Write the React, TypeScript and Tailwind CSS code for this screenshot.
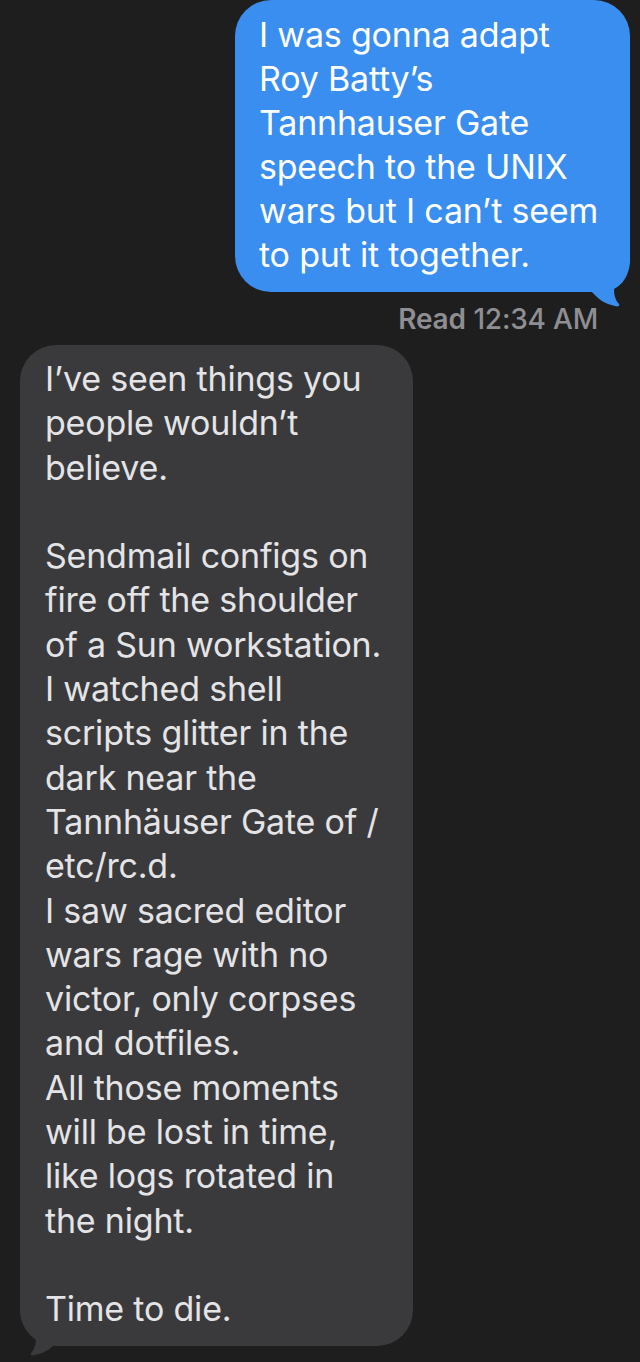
import React from "react";

const sent = [
  "I was gonna adapt",
  "Roy Batty\u2019s",
  "Tannhauser Gate",
  "speech to the UNIX",
  "wars but I can\u2019t seem",
  "to put it together.",
];

const received = [
  "I\u2019ve seen things you",
  "people wouldn\u2019t",
  "believe.",
  "",
  "Sendmail configs on",
  "fire off the shoulder",
  "of a Sun workstation.",
  "I watched shell",
  "scripts glitter in the",
  "dark near the",
  "Tannh\u00e4user Gate of /",
  "etc/rc.d.",
  "I saw sacred editor",
  "wars rage with no",
  "victor, only corpses",
  "and dotfiles.",
  "All those moments",
  "will be lost in time,",
  "like logs rotated in",
  "the night.",
  "",
  "Time to die.",
];

const TAIL =
  "M 40 0 L 40 12 C 39 26 32 35 24 39 C 24 46 26 51 29 54 C 30 56 28 57 25 56 C 15 54 8 49 2 42 L 2 0 Z";

const Tail: React.FC<{ color: string; flip?: boolean; className: string }> = ({
  color,
  flip,
  className,
}) => (
  <svg
    width="42"
    height="60"
    viewBox="0 0 42 60"
    className={className}
    style={flip ? { transform: "scaleX(-1)" } : undefined}
  >
    <path d={TAIL} fill={color} />
  </svg>
);

const App: React.FC = () => {
  return (
    <div
      className="w-[640px] h-[1362px] overflow-hidden bg-[#1e1e1e] flex flex-col"
      style={{ fontFamily: "Inter, 'Noto Sans', sans-serif" }}
    >
      <div className="self-end mr-[10px] relative">
        <div className="relative z-10 w-[395px] rounded-[36px] bg-[#3a8ef0] pl-[24px] pt-[13px] pb-[15px] text-[34px] leading-[44px] text-white tracking-[-0.2px]">
          {sent.map((line, i) => (
            <div key={i} className="whitespace-nowrap">
              {line}
            </div>
          ))}
        </div>
        <Tail color="#3a8ef0" className="absolute right-[-2px] bottom-[-18px]" />
      </div>

      <div className="self-end mr-[42px] mt-[10px] text-[28px] leading-[34px] text-[#8e8e93] tracking-[-0.2px]">
        <span className="font-semibold">Read</span>{" "}
        <span className="font-medium">12:34 AM</span>
      </div>

      <div className="self-start ml-[20px] mt-[9px] relative">
        <div className="relative z-10 w-[393px] rounded-[36px] bg-[#3a3a3c] pl-[25px] pt-[12px] pb-[14px] text-[34px] leading-[44.3px] text-[#e4e4e6] tracking-[-0.2px]">
          {received.map((line, i) => (
            <div key={i} className="whitespace-nowrap h-[44.3px]">
              {line}
            </div>
          ))}
        </div>
        <Tail color="#3a3a3c" flip className="absolute left-[-2px] bottom-[-13px]" />
      </div>
    </div>
  );
};

export default App;
